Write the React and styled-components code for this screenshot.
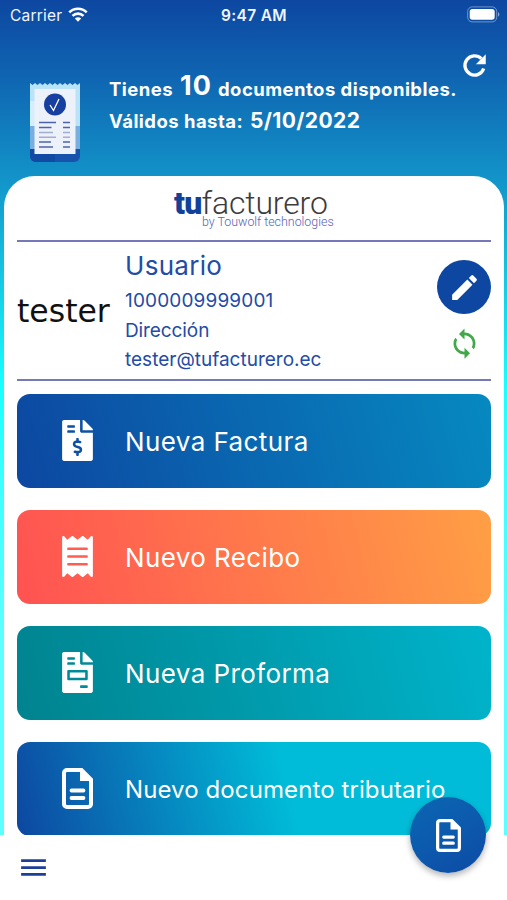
import React from "react";
import styled, { createGlobalStyle } from "styled-components";
import { MdEdit, MdSync, MdMenu } from "react-icons/md";
import { FaFileInvoiceDollar, FaReceipt, FaFileInvoice } from "react-icons/fa";

const GlobalStyle = createGlobalStyle`
  * {
    box-sizing: border-box;
  }

  body {
    margin: 0;
    font-family: Inter, "Liberation Sans", sans-serif;
  }
`;

const Screen = styled.div`
  position: relative;
  width: 507px;
  height: 900px;
  overflow: hidden;
  display: flex;
  flex-direction: column;
  background: linear-gradient(
    180deg,
    #0d47a1 0,
    #0f62b0 70px,
    #1292c8 175px,
    #18ffff 385px,
    #3dffff 480px,
    #5cffff 640px,
    #5cffff 835px
  );
`;

const StatusBar = styled.div`
  height: 30px;
  flex: none;
  display: grid;
  grid-template-columns: 1fr auto 1fr;
  align-items: center;
  padding: 0 7px 0 10px;
  color: #f0f5ff;
  font-size: 15.5px;
  font-weight: 500;

  .carrier {
    display: flex;
    align-items: center;
    gap: 6px;
    font-weight: 400;
    letter-spacing: 0.2px;
  }

  .carrier svg {
    margin-top: -2px;
  }

  .time {
    font-weight: 600;
    letter-spacing: 0.35px;
    margin-right: 2px;
  }

  .battery {
    justify-self: end;
    display: block;
    margin-top: -1px;
  }
`;

const Header = styled.div`
  height: 146px;
  flex: none;
  display: flex;
  padding: 20px 16px 0 29px;
  color: #fff;

  .receipt {
    margin: 31px 29px 0 0;
    flex: none;
  }

  .refresh {
    margin: -1px 0 0 auto;
    flex: none;
  }
`;

const Notice = styled.div`
  padding-top: 20px;
  width: 350px;
  margin-right: -40px;
  font-weight: 700;
  white-space: nowrap;

  p {
    margin: 0;
    height: 34px;
    line-height: 33px;
    font-size: 18.5px;
    letter-spacing: 0.46px;
  }

  .count {
    font-size: 27px;
    margin: 0 1px 0 2px;
    letter-spacing: 1.2px;
    position: relative;
    top: -1px;
  }

  .date {
    font-size: 21px;
    margin-left: 2px;
    letter-spacing: 0.4px;
  }
`;

const Sheet = styled.div`
  flex: none;
  height: 659px;
  margin: 0 3px 0 4px;
  padding: 10px 13px 0;
  background: #fff;
  border-radius: 31px 31px 0 0;
  overflow: hidden;
`;

const Brand = styled.div`
  height: 54px;
  width: 160px;
  margin: 0 auto;
  white-space: nowrap;
  font-family: Roboto, sans-serif;

  .name {
    height: 29px;
    line-height: 34px;
    font-size: 32px;
    font-weight: 300;
    letter-spacing: -0.15px;
    color: #3c3c3c;
  }

  .name b {
    font-weight: 900;
    letter-spacing: -0.8px;
    color: #12419a;
  }

  .tagline {
    padding-left: 28px;
    line-height: 13px;
    font-size: 12.4px;
    font-weight: 300;
    color: #5661b5;
  }
`;

const Profile = styled.div`
  height: 141px;
  display: flex;
  border-top: 2px solid #7579b9;
  border-bottom: 2px solid #7579b9;
  color: #234ba7;

  .avatar {
    width: 108px;
    padding-top: 1px;
    line-height: 137px;
    font-family: "DejaVu Sans", sans-serif;
    font-size: 31.5px;
    color: #111;
  }
`;

const Details = styled.div`
  flex: 1;
  padding-top: 8px;
  white-space: nowrap;
`;

const Line = styled.div`
  height: ${({ $big }) => ($big ? 36 : 29.7)}px;
  line-height: ${({ $big }) => ($big ? 32 : 30)}px;
  font-size: ${({ $big }) => ($big ? 26 : 19)}px;
  letter-spacing: ${({ $spacing }) => $spacing || 0}px;
`;

const Actions = styled.div`
  width: 54px;
  display: flex;
  flex-direction: column;
  align-items: center;
  padding-top: 18px;
  gap: 13px;
  color: #43a84a;
`;

const EditButton = styled.div`
  width: 54px;
  height: 54px;
  flex: none;
  border-radius: 50%;
  background: #0d47a1;
  color: #fff;
  display: flex;
  align-items: center;
  justify-content: center;
`;

const Menu = styled.div`
  display: flex;
  flex-direction: column;
  gap: 22px;
  padding-top: 13px;
`;

const MenuButton = styled.div`
  height: 94px;
  flex: none;
  display: flex;
  align-items: center;
  padding-left: 45px;
  border-radius: 13px;
  background: ${({ $bg }) => $bg};
  color: #fff;
  font-size: ${({ $size }) => $size || 26}px;
  letter-spacing: ${({ $spacing }) => $spacing || 0.4}px;
  white-space: nowrap;

  svg {
    flex: none;
    width: 31px;
    height: 41px;
    margin: -2px 32px 0 0;
  }
`;

const BottomBar = styled.div`
  flex: 1;
  background: #fff;
  padding: 16px 17px;
  color: #1c3f98;
`;

const Fab = styled.div`
  position: absolute;
  left: 410px;
  top: 797px;
  width: 76px;
  height: 76px;
  border-radius: 50%;
  display: flex;
  align-items: center;
  justify-content: center;
  color: #fff;
  background: linear-gradient(150deg, #0b66b3, #0c57ac 60%, #0d4aa3);
  box-shadow: 0 3px 6px rgba(0, 0, 0, 0.3);
`;

const WifiIcon = () => (
  <svg width="20" height="15" viewBox="0 0 21 16" fill="none" stroke="#fff" strokeWidth="2.8">
    <path d="M1.200 5.800C6.500.6 14.500.6 19.800 5.800" />
    <path d="M4.600 9.500c3.400-3.200 8.400-3.200 11.800 0" />
    <path d="M10.500 15.600 7.100 12.300c1.800-1.700 5-1.700 6.800 0z" fill="#fff" stroke="none" />
  </svg>
);

const BatteryIcon = () => (
  <svg className="battery" width="33" height="17" viewBox="0 0 33 17">
    <rect x="0.7" y="0.9" width="29" height="15" rx="4.5" fill="none" stroke="#fff" strokeOpacity="0.4" />
    <rect x="2.7" y="3" width="25" height="10.8" rx="2.8" fill="#fff" />
    <path d="M31 6.200c1.800.6 1.800 3.800 0 4.400z" fill="#fff" fillOpacity="0.5" />
  </svg>
);

const RefreshIcon = () => (
  <svg className="refresh" width="33" height="33" viewBox="0 0 24 24" fill="none" stroke="#fff" strokeWidth="2.4">
    <path d="M18.700 14.200A7 7 0 1 1 17 7" />
    <path d="M20.200 3.900v7.200h-7.200z" fill="#fff" stroke="none" />
  </svg>
);

const ReceiptArt = () => (
  <svg className="receipt" width="51" height="82" viewBox="0 0 51 82">
    <path d="M1 62h50v13a6 6 0 0 1-6 6H7a6 6 0 0 1-6-6z" fill="#1753ac" />
    <path d="M1 68h25v13H7a6 6 0 0 1-6-6z" fill="#124aa3" />
    <path
      d="M1 2l2.500 2L6 2l2.500 2L11 2l2.500 2L16 2l2.500 2L21 2l2.500 2L26 2l2.500 2L31 2l2.500 2L36 2l2.500 2L41 2l2.500 2L46 2l2.500 2L51 2v43H1z"
      fill="#b9e3f8"
    />
    <path d="M1 20h25v25H1z" fill="#d4eefb" />
    <path d="M1 45h50v23H1z" fill="#76afe0" />
    <path d="M5.500 8h41v65h-41z" fill="#edf1fa" />
    <circle cx="26" cy="23.500" r="11" fill="#163fa0" />
    <path d="M21 24l3.500 5.500L30 18" fill="none" stroke="#fff" strokeWidth="1.300" />
    <path d="M10 41.500h17M10 46.500h12.500M10 61h12M10 66h14M34 41.500h7M34 46.500h7M34 61h7M34 66h7" stroke="#4c64ae" strokeWidth="1.500" />
    <path d="M10 51.500h14M10 56.200h17M34 51.500h7M34 56.200h7" stroke="#a3adcf" strokeWidth="1.500" />
  </svg>
);

const DocumentIcon = ({ width, height }) => (
  <svg width={width} height={height} viewBox="0 0 31 41" fill="none" stroke="currentColor">
    <path d="M5 2h14.500L29 11.500V36a3 3 0 0 1-3 3H5a3 3 0 0 1-3-3V5a3 3 0 0 1 3-3z" strokeWidth="4" />
    <path d="M18 2v11h11z" fill="currentColor" stroke="none" />
    <path d="M9.500 22.500h12M9.500 30h12" strokeWidth="3.800" strokeLinecap="round" />
  </svg>
);

const menuItems = [
  {
    label: "Nueva Factura",
    icon: <FaFileInvoiceDollar />,
    bg: "linear-gradient(75deg, #0d47a1, #0689c0)",
  },
  {
    label: "Nuevo Recibo",
    icon: <FaReceipt />,
    bg: "linear-gradient(75deg, #ff5252, #ff9f45)",
  },
  {
    label: "Nueva Proforma",
    icon: <FaFileInvoice />,
    bg: "linear-gradient(75deg, #00838f, #00b4cb)",
  },
  {
    label: "Nuevo documento tributario",
    icon: <DocumentIcon />,
    bg: "linear-gradient(75deg, #0d47a1, #00bcd8 57%)",
    size: 24,
    spacing: 0.1,
  },
];

const App = () => {
  return (
    <Screen>
      <GlobalStyle />
      <StatusBar>
        <div className="carrier">
          Carrier <WifiIcon />
        </div>
        <div className="time">9:47 AM</div>
        <BatteryIcon />
      </StatusBar>
      <Header>
        <ReceiptArt />
        <Notice>
          <p>
            Tienes <span className="count">10</span> documentos disponibles.
          </p>
          <p>
            Válidos hasta: <span className="date">5/10/2022</span>
          </p>
        </Notice>
        <RefreshIcon />
      </Header>
      <Sheet>
        <Brand>
          <div className="name">
            <b>tu</b>facturero
          </div>
          <div className="tagline">by Touwolf technologies</div>
        </Brand>
        <Profile>
          <div className="avatar">tester</div>
          <Details>
            <Line $big $spacing={0.3}>
              Usuario
            </Line>
            <Line $spacing={0.15}>1000009999001</Line>
            <Line $spacing={-0.1}>Dirección</Line>
            <Line>tester@tufacturero.ec</Line>
          </Details>
          <Actions>
            <EditButton>
              <MdEdit size={33} />
            </EditButton>
            <MdSync size={33} />
          </Actions>
        </Profile>
        <Menu>
          {menuItems.map(({ label, icon, bg, size, spacing }) => (
            <MenuButton key={label} $bg={bg} $size={size} $spacing={spacing}>
              {icon}
              {label}
            </MenuButton>
          ))}
        </Menu>
      </Sheet>
      <BottomBar>
        <MdMenu size={33} />
      </BottomBar>
      <Fab>
        <DocumentIcon width={25} height={33} />
      </Fab>
    </Screen>
  );
};

export default App;
